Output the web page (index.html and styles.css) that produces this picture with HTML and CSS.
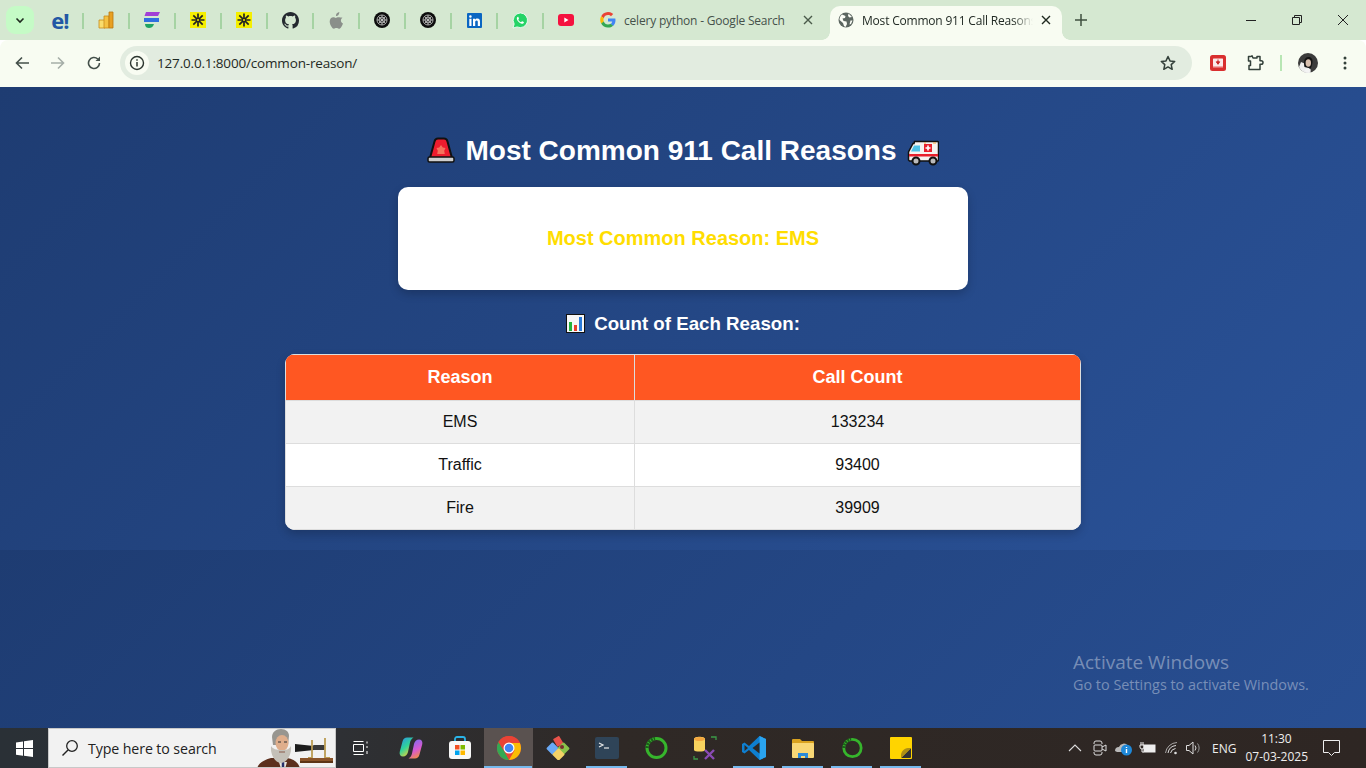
FILE: index.html
```html
<!DOCTYPE html>
<html lang="en">
<head>
<meta charset="utf-8">
<title>Most Common 911 Call Reasons</title>
<link rel="stylesheet" href="styles.css">
</head>
<body>
<div class="screen">
  <header class="tabstrip">
    <button class="tabsearch"><svg width="12" height="12" viewBox="0 0 12 12"><path d="M2.500 4.500 6 8l3.500-3.500" fill="none" stroke="#1f2a1f" stroke-width="1.600"/></svg></button>
    <div class="pins">
      <div class="pin"><span class="edureka">e!</span></div>
      <div class="pin"><svg width="16" height="18" viewBox="0 0 16 18"><path d="M1 9h6v8H1z" fill="#f9dc6c" stroke="#c98a1b" stroke-width=".8"/><path d="M6 5h5v12H6z" fill="#f4c142" stroke="#c98a1b" stroke-width=".8"/><path d="M11 1h4v16h-4z" fill="#e8a022" stroke="#b9770f" stroke-width=".8"/></svg></div>
      <div class="pin"><svg width="18" height="18" viewBox="0 0 18 18"><path d="M3 1h14l-2 4H1.500z" fill="#a23fd6"/><path d="M1 7h15v4H1z" fill="#2f6fe0"/><path d="M2 13h9c-1 3-3 4-5 4s-4-1-4-4z" fill="#1fa463"/></svg></div>
      <div class="pin"><svg width="16" height="16" viewBox="0 0 16 16"><rect width="16" height="16" fill="#f5ef00"/><g stroke="#222" stroke-width="1.700"><path d="M8 1.500v13M1.500 8h13M3.300 3.300l9.400 9.400M12.700 3.300l-9.400 9.400"/></g><circle cx="8" cy="8" r="1" fill="#f5ef00"/></svg></div>
      <div class="pin"><svg width="16" height="16" viewBox="0 0 16 16"><rect width="16" height="16" fill="#f5ef00"/><g stroke="#222" stroke-width="1.700"><path d="M8 1.500v13M1.500 8h13M3.300 3.300l9.400 9.400M12.700 3.300l-9.400 9.400"/></g><circle cx="8" cy="8" r="1" fill="#f5ef00"/></svg></div>
      <div class="pin"><svg width="17" height="17" viewBox="0 0 16 16"><path fill="#24292f" d="M8 0C3.580 0 0 3.580 0 8c0 3.540 2.290 6.530 5.470 7.590.4.070.55-.17.55-.38 0-.19-.01-.82-.01-1.490-2.010.37-2.530-.49-2.690-.94-.09-.23-.48-.94-.82-1.130-.28-.15-.68-.52-.01-.53.63-.01 1.080.58 1.230.82.720 1.210 1.870.87 2.330.66.070-.52.280-.87.510-1.070-1.780-.2-3.640-.89-3.640-3.950 0-.87.310-1.590.820-2.150-.08-.2-.36-1.020.08-2.120 0 0 .67-.21 2.200.82.640-.18 1.320-.27 2-.27s1.360.09 2 .27c1.530-1.040 2.200-.82 2.200-.82.440 1.100.160 1.920.080 2.120.510.560.820 1.270.820 2.150 0 3.070-1.870 3.750-3.650 3.950.290.250.540.730.540 1.480 0 1.070-.010 1.930-.010 2.200 0 .210.150.460.550.380A8.010 8.010 0 0 0 16 8c0-4.420-3.580-8-8-8z"/></svg></div>
      <div class="pin"><svg width="15" height="17" viewBox="0 0 15 17"><path fill="#8a8f8a" d="M10.300 0c.1 1.200-.3 2.100-.9 2.900-.6.700-1.500 1.200-2.400 1.100-.1-1 .3-2 .9-2.700C8.500.6 9.500.1 10.300 0zM13.500 5.800c-1 .7-1.600 1.600-1.600 2.800 0 1.400.8 2.500 2.100 3-.4 1.200-1 2.300-1.700 3.300-.7.900-1.400 1.800-2.400 1.800s-1.300-.6-2.500-.6-1.600.6-2.500.6c-1 0-1.700-1-2.400-2C1.400 13.300.7 11.300.7 9.500c0-2.800 1.800-4.300 3.600-4.300 1 0 1.800.7 2.500.7.600 0 1.600-.7 2.700-.7.900 0 2.800.2 4 .6z"/></svg></div>
      <div class="pin"><svg width="16" height="16" viewBox="0 0 16 16"><circle cx="8" cy="8" r="8" fill="#0d0d0d"/><g fill="none" stroke="#c9c9c9" stroke-width=".8"><circle cx="8" cy="8" r="5"/><circle cx="8" cy="8" r="3"/><path d="M3 8h10M8 3v10M4.500 4.500l7 7M11.500 4.500l-7 7"/></g></svg></div>
      <div class="pin"><svg width="16" height="16" viewBox="0 0 16 16"><circle cx="8" cy="8" r="8" fill="#0d0d0d"/><g fill="none" stroke="#c9c9c9" stroke-width=".8"><circle cx="8" cy="8" r="5"/><circle cx="8" cy="8" r="3"/><path d="M3 8h10M8 3v10M4.500 4.500l7 7M11.500 4.500l-7 7"/></g></svg></div>
      <div class="pin"><svg width="15" height="15" viewBox="0 0 15 15"><rect width="15" height="15" rx="1" fill="#0a66c2"/><path fill="#fff" d="M2.300 5.700h2.200V13H2.300zM3.400 2.200a1.300 1.300 0 1 1 0 2.600 1.300 1.300 0 0 1 0-2.600zM6 5.700h2.100v1c.4-.7 1.200-1.200 2.300-1.200 2.200 0 2.600 1.500 2.600 3.400V13h-2.200V9.300c0-.9 0-1.900-1.200-1.900s-1.400.9-1.400 1.900V13H6z"/></svg></div>
      <div class="pin"><svg width="17" height="17" viewBox="0 0 17 17"><path fill="#25d366" stroke="#fff" stroke-width=".8" d="M8.500 1a7.300 7.300 0 0 0-6.300 11L1 16l4.100-1.100A7.300 7.300 0 1 0 8.500 1z"/><path fill="#fff" d="M6 4.700c-.3 0-.8.300-1 .8-.4 1-.1 2.300 1 3.700 1.300 1.600 2.700 2.400 4 2.600.8.100 1.500-.4 1.800-1 .1-.3.1-.6 0-.7l-1.600-.8c-.2 0-.3 0-.4.100l-.6.700c-.1.100-.3.100-.4.100-1-.4-1.900-1.200-2.500-2.200 0-.2 0-.3.100-.4l.5-.6v-.4L6.400 5c-.1-.2-.2-.3-.4-.3z"/></svg></div>
      <div class="pin"><svg width="16" height="12" viewBox="0 0 16 12"><rect width="16" height="12" rx="3" fill="#f5123f"/><path d="M6.300 3.500v5L10.500 6z" fill="#fff"/></svg></div>
    </div>
    <div class="tab">
      <svg class="favicon" width="16" height="16" viewBox="0 0 16 16"><path fill="#ea4335" d="M8 3.100c1.300 0 2.300.500 3 1.200l2.200-2.200A7.600 7.600 0 0 0 1.200 4.300l2.600 2A4.500 4.500 0 0 1 8 3.100z"/><path fill="#4285f4" d="M15.500 8.200c0-.6-.1-1.100-.2-1.600H8v3h4.200a3.600 3.600 0 0 1-1.600 2.400l2.500 1.900c1.500-1.400 2.400-3.400 2.400-5.700z"/><path fill="#fbbc05" d="M3.800 9.700a4.500 4.500 0 0 1 0-3.400l-2.600-2a7.600 7.600 0 0 0 0 7.400z"/><path fill="#34a853" d="M8 15.600c2.100 0 3.800-.7 5.100-1.900L10.600 11.800c-.7.500-1.500.8-2.600.8a4.500 4.500 0 0 1-4.200-3l-2.600 2A7.600 7.600 0 0 0 8 15.600z"/></svg>
      <span class="tabtitle">celery python - Google Search</span>
      <svg class="tabclose" width="10" height="10" viewBox="0 0 10 10"><path d="m1 1 8 8M9 1 1 9" stroke="#4a5a4a" stroke-width="1.400"/></svg>
    </div>
    <div class="tab tab-active">
      <svg class="favicon" width="16" height="16" viewBox="0 0 16 16"><circle cx="8" cy="8" r="7.500" fill="#5b6660"/><path fill="#fbfdf6" d="M4 2.500 7.500 4 7 6 4.500 6.500 5.500 9l3 .5.500 2.500L7.500 15 6 14l-1-3-3.500-3C1.500 5.500 2.500 3.500 4 2.500zM10.500 1.500 14 5l-2.500.5-1.500-1.500zM12.500 8.500H14.500L13 12l-1.500.5z"/></svg>
      <span class="tabtitle tabtitle-active">Most Common 911 Call Reasons</span>
      <svg class="tabclose" width="10" height="10" viewBox="0 0 10 10"><path d="m1 1 8 8M9 1 1 9" stroke="#1f2a1f" stroke-width="1.400"/></svg>
    </div>
    <svg class="newtab" width="12" height="12" viewBox="0 0 12 12"><path d="M6 0v12M0 6h12" stroke="#3f4f3f" stroke-width="1.500"/></svg>
    <div class="winctl">
      <svg width="10" height="10" viewBox="0 0 10 10"><path d="M0 5.500h10" stroke="#222" stroke-width="1"/></svg>
      <svg width="10" height="10" viewBox="0 0 10 10"><path d="M.5 2.500h7v7h-7zM2.500 2.500v-2h7v7h-2" fill="none" stroke="#222"/></svg>
      <svg width="10" height="10" viewBox="0 0 10 10"><path d="m0 0 10 10M10 0 0 10" stroke="#222"/></svg>
    </div>
  </header>
  <nav class="toolbar">
    <svg class="navicon" width="14" height="14" viewBox="0 0 14 14"><path d="M14 7H2M7 1.500 1.500 7 7 12.500" fill="none" stroke="#44504a" stroke-width="1.600"/></svg>
    <svg class="navicon" width="14" height="14" viewBox="0 0 14 14"><path d="M0 7h12M7 1.500 12.500 7 7 12.500" fill="none" stroke="#a5aea8" stroke-width="1.600"/></svg>
    <svg class="navicon" width="14" height="14" viewBox="0 0 14 14"><path d="M12.500 7A5.500 5.500 0 1 1 10.800 3" fill="none" stroke="#44504a" stroke-width="1.600"/><path d="M13 .5V5H8.500z" fill="#44504a"/></svg>
    <div class="omnibox">
      <span class="siteinfo"><svg width="16" height="16" viewBox="0 0 16 16"><circle cx="8" cy="8" r="6.500" fill="none" stroke="#2b352e" stroke-width="1.400"/><path d="M8 7v4.500M8 4.300v1.500" stroke="#2b352e" stroke-width="1.500"/></svg></span>
      <span class="url">127.0.0.1:8000/common-reason/</span>
      <svg class="star" width="16" height="16" viewBox="0 0 16 16"><path d="m8 1.500 2 4.400 4.700.5-3.500 3.200 1 4.700L8 11.900l-4.200 2.400 1-4.700L1.300 6.400 6 5.900z" fill="none" stroke="#33403a" stroke-width="1.500" stroke-linejoin="round"/></svg>
    </div>
    <div class="extensions">
      <svg class="ext-red" width="16" height="16" viewBox="0 0 16 16"><rect width="16" height="16" rx="2.500" fill="#d92f2f"/><rect x="3" y="3.500" width="10" height="7.500" rx=".5" fill="#fbeaea"/><path d="M3 11h10v1.500H3z" fill="#f3a9a9"/><path d="M8 4.500v3M6.300 6.800 8 9.300l1.700-2.500z" fill="#c92626" stroke="#c92626"/></svg>
      <svg class="ext-puzzle" width="17" height="16" viewBox="0 0 17 16"><path d="M1.500 1.500H4L5 .8h0L6 3h4V1.500h3v4.200h1.200a1.600 1.600 0 0 1 0 3.600H13v5.200H2V10.500H3.500V6H1.500z" fill="none" stroke="#33403a" stroke-width="1.500" stroke-linejoin="round"/></svg>
      <span class="toolsep"></span>
      <svg class="avatar" width="20" height="20" viewBox="0 0 20 20"><circle cx="10" cy="10" r="10" fill="#3b3b3b"/><path d="M1 14c2 4 5 6 9 6 1 0 2 0 3-.5L10 12 3 9z" fill="#eee"/><path d="M6 9c0-3 2-5 4.500-5S15 6 14.500 9c-.2 3-1 5-2 6.500L6.500 14C6 12 6 11 6 9z" fill="#141414"/><ellipse cx="10.300" cy="10" rx="2.700" ry="3.700" fill="#d8bfae"/><path d="M6.500 17c1.500-2 5-2 6.500 0l-2 2.500H8z" fill="#f4f4f4"/></svg>
      <svg class="kebab" width="4" height="14" viewBox="0 0 4 14"><g fill="#33403a"><circle cx="2" cy="2" r="1.500"/><circle cx="2" cy="7" r="1.500"/><circle cx="2" cy="12" r="1.500"/></g></svg>
    </div>
  </nav>
  <main class="page">
    <h1 class="title">
      <svg class="emoji-siren" width="28" height="26" viewBox="0 0 28 26"><path d="M3 21 7.500 4.500C8 2.500 9 1.500 11 1.500h6c2 0 3 1 3.500 3L25 21z" fill="#ee1c2e" stroke="#111" stroke-width="2" stroke-linejoin="round"/><path d="m14 8 1.800 2.400 2.700.6-1.300 2.700.6 3.300H10.200l.6-3.300L9.500 11l2.700-.6z" fill="#f5735c"/><rect x="1" y="20" width="26" height="5" rx="1.500" fill="#cfcfcf" stroke="#111" stroke-width="1.500"/></svg>
      <span>Most Common 911 Call Reasons</span>
      <svg class="emoji-amb" width="32" height="26" viewBox="0 0 32 26"><path d="M1.500 20V12L6 3.500h1l.5-2h23a1 1 0 0 1 1 1V20a1 1 0 0 1-1 1H2.500z" fill="#f6f3f0" stroke="#111" stroke-width="1.500"/><path d="M4 11.500 7 5.500h6v6z" fill="#4fc3e8"/><rect x="17" y="4" width="8" height="8" fill="#e8202c"/><path d="M21 5.500v5M18.500 8h5" stroke="#fff" stroke-width="1.600"/><path d="M17 3h2M26 3h3" stroke="#f3a23a" stroke-width="1"/><rect x="2" y="14" width="29" height="2.500" fill="#e8202c"/><circle cx="9" cy="21" r="3.500" fill="#bbb" stroke="#111" stroke-width="2"/><circle cx="26" cy="21" r="3.500" fill="#bbb" stroke="#111" stroke-width="2"/></svg>
    </h1>
    <section class="card">
      <h2 class="reason">Most Common Reason: EMS</h2>
    </section>
    <h3 class="subtitle">
      <svg width="19" height="19" viewBox="0 0 19 19"><rect x=".5" y=".5" width="18" height="18" fill="#f7f7f7" stroke="#111"/><rect x="3" y="8" width="3" height="9" fill="#22b33a"/><rect x="8" y="11" width="3" height="6" fill="#e8402c"/><rect x="13" y="3" width="3" height="14" fill="#2a7ad9"/></svg>
      <span>Count of Each Reason:</span>
    </h3>
    <table class="counts">
      <thead><tr><th class="col-reason">Reason</th><th>Call Count</th></tr></thead>
      <tbody>
        <tr><td>EMS</td><td>133234</td></tr>
        <tr><td>Traffic</td><td>93400</td></tr>
        <tr><td>Fire</td><td>39909</td></tr>
      </tbody>
    </table>
    <div class="watermark">
      <div class="wm-title">Activate Windows</div>
      <div class="wm-sub">Go to Settings to activate Windows.</div>
    </div>
  </main>
  <footer class="taskbar">
    <div class="start"><svg width="17" height="17" viewBox="0 0 17 17"><path fill="#fff" d="M0 2.400 7 1.400v6.700H0zM8 1.300 17 0v8.100H8zM0 9h7v6.700l-7-1zM8 9h9v8l-9-1.300z"/></svg></div>
    <div class="search">
      <svg width="18" height="18" viewBox="0 0 18 18"><circle cx="11" cy="7" r="5.300" fill="none" stroke="#222" stroke-width="1.300"/><path d="M7 11 1.500 16.500" stroke="#222" stroke-width="1.500"/></svg>
      <span class="search-text">Type here to search</span>
      <svg class="doodle" width="84" height="40" viewBox="0 0 84 40"><path d="M4 40c1-6 7-9 14-11h16c7 1 12 5 13 11z" fill="#5c2f1d"/><path d="M26 33h8l-2 7h-4z" fill="#e9e6df"/><path d="M30 33v7" stroke="#27306a" stroke-width="2.500"/><path d="M19 8c0-5 4-8 9-8 5 0 8 3 8 7l-1 9H20z" fill="#989690"/><ellipse cx="29" cy="14" rx="6.500" ry="8" fill="#dfae8c"/><path d="M18 17c2 3 5 4 11 4s7-1 9-4c1 8-4 17-10 17s-11-9-10-17z" fill="#c4c0b8"/><path d="M25 13h3M31 13h3" stroke="#333"/><path d="M26 23h6" stroke="#8a5a4a"/><path d="M42 15l19 2v4l-19 2z" fill="#1c1c1c"/><rect x="60" y="16" width="12" height="5" rx="1" fill="#3a3a3a"/><path d="M59 11v18M72 9v20M59 29h-4M72 29h5" stroke="#bb9c52" stroke-width="1.800" fill="none"/><path d="M47 29h33v3H47z" fill="#8a5429"/><path d="M47 32h33v2H47z" fill="#5c3516"/></svg>
    </div>
    <div class="apps">
      <div class="app app-taskview"><svg width="16" height="16" viewBox="0 0 16 16"><path d="M.5 4.500h10v7H.5zM.5 1.500h10M.5 14.500h10M14 1.500v2M14 6v2M14 11v3" fill="none" stroke="#fff"/></svg></div>
      <div class="app"><svg width="24" height="24" viewBox="0 0 24 24"><defs><linearGradient id="cp1" x1="0" y1="0" x2=".6" y2="1"><stop offset="0" stop-color="#2b8fe8"/><stop offset=".55" stop-color="#2fd39a"/><stop offset="1" stop-color="#e8d23a"/></linearGradient><linearGradient id="cp2" x1=".3" y1="0" x2=".7" y2="1"><stop offset="0" stop-color="#7a6cf0"/><stop offset=".55" stop-color="#d85ad0"/><stop offset="1" stop-color="#f5913a"/></linearGradient></defs><path d="M8 1.500h6.500c-2 1-3 3-3.500 5L9 16c-.6 2.500-2.500 4.500-5 4.500-2.500 0-3.800-2-3.300-4.500L3.500 5.500C4 3 6 1.500 8 1.500z" fill="url(#cp1)"/><path d="M16 22.500H9.500c2-1 3-3 3.500-5L15 8c.6-2.500 2.500-4.500 5-4.500 2.500 0 3.800 2 3.300 4.500l-2.800 10.500C20 21 18 22.500 16 22.500z" fill="url(#cp2)"/></svg></div>
      <div class="app"><svg width="24" height="24" viewBox="0 0 24 24"><path d="M7 6V3a2 2 0 0 1 2-2h6a2 2 0 0 1 2 2v3" fill="none" stroke="#2ab4e8" stroke-width="1.800"/><rect x="1" y="5" width="22" height="18" rx="3" fill="#f8f8f8"/><rect x="7" y="9" width="4.500" height="4.500" fill="#f25022"/><rect x="12.500" y="9" width="4.500" height="4.500" fill="#7fba00"/><rect x="7" y="14.500" width="4.500" height="4.500" fill="#00a4ef"/><rect x="12.500" y="14.500" width="4.500" height="4.500" fill="#ffb900"/></svg></div>
      <div class="app app-open app-focus"><svg width="24" height="24" viewBox="0 0 24 24"><circle cx="12" cy="12" r="12" fill="#ea4335"/><path d="M12 24A12 12 0 0 1 1.600 6L7 15l5 9z" fill="#34a853"/><path d="M12 24 17.500 14.500 12 7h10.900A12 12 0 0 1 12 24z" fill="#fbbc05"/><path d="M1.600 6A12 12 0 0 1 22.900 7H12a5 5 0 0 0-5 8z" fill="#ea4335"/><circle cx="12" cy="12" r="5.500" fill="#fff"/><circle cx="12" cy="12" r="4.300" fill="#4285f4"/></svg></div>
      <div class="app"><svg width="24" height="24" viewBox="0 0 24 24"><rect x="9" y="1" width="7" height="9" rx="1" fill="#e8524a" transform="rotate(-30 12 6)"/><rect x="2" y="8" width="9" height="9" rx="1" fill="#6aa9f5" transform="rotate(45 6.500 12.500)"/><rect x="13" y="8" width="9" height="9" rx="1" fill="#8bc34a" transform="rotate(45 17.500 12.500)"/><rect x="8" y="14" width="9" height="9" rx="1" fill="#f3d267" transform="rotate(45 12.500 18.500)"/><circle cx="16" cy="11" r="2" fill="#7a3030"/></svg></div>
      <div class="app app-open"><svg width="24" height="22" viewBox="0 0 24 22"><rect width="24" height="22" rx="2" fill="#2f4458"/><path d="m4 6 4 2-4 2" fill="none" stroke="#e8e8e8" stroke-width="1.200"/><path d="M9 11h5" stroke="#e8e8e8" stroke-width="1.200"/></svg></div>
      <div class="app"><svg width="24" height="24" viewBox="0 0 24 24"><circle cx="12.500" cy="12" r="9.500" fill="none" stroke="#36b52c" stroke-width="3"/><path d="M3 12A10 10 0 0 1 11 2.500" fill="none" stroke="#1c5c1a" stroke-width="3.500" stroke-dasharray="2 1"/></svg></div>
      <div class="app"><svg width="24" height="24" viewBox="0 0 24 24"><path d="M1 20v3h4M18 1h5v3" fill="none" stroke="#3c9a48" stroke-width="1.300"/><path d="M1 3c0-3 11-3 11 0v11c0 2-11 2-11 0z" fill="#f7d35e"/><ellipse cx="6.500" cy="3" rx="5.500" ry="2" fill="#f3a740"/><path d="m12 14 9 9M21 14l-9 9" stroke="#8a4bb5" stroke-width="2.400"/></svg></div>
      <div class="app app-open"><svg width="24" height="24" viewBox="0 0 24 24"><path d="M17.500 0 24 3v18l-6.500 3L7 14l-4.500 3.500L0 16V8l2.500-1.500L7 10z" fill="#0e7fd0"/><path d="M17.500 0 24 3v18l-6.500 3z" fill="#2aa4f0"/><path d="M17.500 6.500 10.500 12l7 5.500z" fill="#2d2824"/><path d="M2.500 9 6 12l-3.500 3z" fill="#2d2824"/></svg></div>
      <div class="app app-open"><svg width="24" height="20" viewBox="0 0 24 20"><path d="M1 2a1 1 0 0 1 1-1h7l2 2h11a1 1 0 0 1 1 1v3H1z" fill="#d9a21f"/><rect x="1" y="5" width="22" height="15" rx="1" fill="#f8d775"/><path d="M7 20v-5h10v5h-3v-2h-4v2z" fill="#2a8ad8"/></svg></div>
      <div class="app app-open"><svg width="22" height="22" viewBox="0 0 24 24"><circle cx="12.500" cy="12" r="9.500" fill="none" stroke="#36b52c" stroke-width="3"/><path d="M3 12A10 10 0 0 1 11 2.500" fill="none" stroke="#1c5c1a" stroke-width="3.500" stroke-dasharray="2 1"/></svg></div>
      <div class="app app-open"><svg width="22" height="22" viewBox="0 0 22 22"><rect width="22" height="22" rx="1" fill="#ffd400"/><path d="M21 11v9a1 1 0 0 1-1 1H11z" fill="#333"/><path d="M21 11H18c-4 0-7 4-7 7v3z" fill="#ae8f14"/></svg></div>
    </div>
    <div class="tray">
      <svg class="tray-up" width="14" height="8" viewBox="0 0 14 8"><path d="m1 7 6-6 6 6" fill="none" stroke="#ddd" stroke-width="1.100"/></svg>
      <svg class="tray-meet" width="14" height="16" viewBox="0 0 14 16"><path d="M1 4V3a2 2 0 0 1 2-2h4a2 2 0 0 1 2 2v1M1 12v1a2 2 0 0 0 2 2h4a2 2 0 0 0 2-2v-1" fill="none" stroke="#ddd"/><rect x="1" y="5" width="8" height="6" rx="1" fill="none" stroke="#ddd"/><path d="m9 7 4-2v6l-4-2" fill="none" stroke="#ddd"/></svg>
      <svg class="tray-cloud" width="19" height="16" viewBox="0 0 19 16"><path d="M1 11a4 4 0 0 1 4-4 5 5 0 0 1 9-1v6H3z" fill="#b9b9b9"/><circle cx="12.500" cy="10" r="5.500" fill="#1e88d8"/><path d="M12.500 9v4M12.500 7v1" stroke="#fff" stroke-width="1.400"/></svg>
      <svg class="tray-batt" width="17" height="12" viewBox="0 0 17 12"><rect x="5" y="3" width="11" height="7" fill="#eee" stroke="#eee"/><path d="M1 3h4v2a2 2 0 0 1-4 0zM2 0v3M4 0v3M3 7v3h2" fill="none" stroke="#eee"/></svg>
      <svg class="tray-wifi" width="15" height="13" viewBox="0 0 15 13"><g fill="none" stroke="#ddd"><path d="M.5 11A12 12 0 0 1 12 .5" opacity=".7"/><path d="M3 11a9 9 0 0 1 8-7.500"/><path d="M5.500 11a6 6 0 0 1 5-4.500"/></g><circle cx="10.500" cy="11" r="1.300" fill="#ddd"/></svg>
      <svg class="tray-vol" width="16" height="14" viewBox="0 0 16 14"><path d="M.5 4.500H3L7 1v12L3 9.500H.5z" fill="none" stroke="#ddd"/><path d="M9 4.500a4 4 0 0 1 0 5" fill="none" stroke="#ddd"/><path d="M11.500 2.500a7 7 0 0 1 0 9" fill="none" stroke="#999"/></svg>
      <span class="lang">ENG</span>
      <div class="clock"><div>11:30</div><div>07-03-2025</div></div>
      <svg class="notify" width="17" height="16" viewBox="0 0 17 16"><path d="M.5.500h16v12h-5l-3 3-3-3h-5z" fill="none" stroke="#eee"/></svg>
    </div>
  </footer>
</div>
</body>
</html>
```
FILE: styles.css
```css
* { box-sizing: border-box; }
html, body { margin: 0; height: 100%; overflow: hidden; }
body { font-family: "Liberation Sans", Arial, sans-serif; }
.screen { width: 1366px; height: 768px; display: flex; flex-direction: column; }

/* browser tab strip */
.tabstrip { height: 40px; background: #d5e8d1; display: flex; align-items: flex-start; position: relative; flex: none; font-family: "Open Sans", sans-serif; }
.tabsearch { width: 28px; height: 28px; margin: 6px 0 0 6px; border: 0; padding: 0; border-radius: 9px; background: #c5fbc6; display: flex; align-items: center; justify-content: center; }
.pins { display: flex; margin-left: 3px; height: 40px; }
.pin { width: 46px; height: 40px; display: flex; align-items: center; justify-content: center; position: relative; }
.pin::after { content: ""; position: absolute; right: -1px; top: 13px; height: 16px; width: 2px; background: #a6d3a3; }
.pin:last-child::after { display: none; }
.edureka { font: 700 22px "Open Sans", sans-serif; color: #2257a4; letter-spacing: -1px; }
.tab { width: 241px; height: 34px; margin-top: 6px; display: flex; align-items: center; padding: 0 17px 6px 11px; gap: 8px; border-radius: 10px 10px 0 0; position: relative; }
.tab-active { background: #f8fcf2; width: 232px; padding: 0 11px 6px 8px; z-index: 1; }
.tab-active::before, .tab-active::after { content: ""; position: absolute; bottom: 0; width: 8px; height: 8px; }
.tab-active::before { left: -8px; background: radial-gradient(circle at 0 0, transparent 7.500px, #f8fcf2 8px); }
.tab-active::after { right: -8px; background: radial-gradient(circle at 100% 0, transparent 7.500px, #f8fcf2 8px); }
.tabtitle { flex: 1; font-size: 12px; letter-spacing: -.2px; color: #45514a; white-space: nowrap; overflow: hidden; }
.tabtitle-active { color: #222b25; -webkit-mask-image: linear-gradient(90deg, #000 88%, transparent); mask-image: linear-gradient(90deg, #000 88%, transparent); }
.favicon { flex: none; }
.tabclose { flex: none; }
.newtab { margin: 14px 0 0 13px; }
.winctl { margin-left: auto; display: flex; align-items: center; height: 40px; }
.winctl svg { width: 10px; margin: 0 18px; }

/* browser toolbar */
.toolbar { height: 47px; background: #f8fcf2; display: flex; align-items: center; flex: none; padding: 0 0 1px 15px; border-radius: 8px 8px 0 0; gap: 22px; }
.navicon { flex: none; }
.omnibox { width: 1072px; height: 34px; margin-left: -3px; border-radius: 17px; background: #e2ece0; display: flex; align-items: center; padding: 0 16px 0 5px; }
.siteinfo { width: 24px; height: 24px; border-radius: 50%; background: #f8fcf2; display: flex; align-items: center; justify-content: center; }
.url { font: 13.500px "Open Sans", sans-serif; color: #1f2a24; margin-left: 8px; flex: 1; letter-spacing: -.17px; }
.star { flex: none; }
.extensions { display: flex; align-items: center; margin-left: -4px; }
.ext-puzzle { margin-left: 21px; }
.toolsep { width: 2px; height: 16px; background: #b8e6b4; margin-left: 16px; }
.avatar { margin-left: 16px; }
.kebab { margin-left: 25px; }

/* page */
.page { flex: 1; position: relative; background: linear-gradient(135deg, #1e3c72, #2a5298) 0 0 / 100% 463px repeat-y; color: #fff; text-align: center; padding-top: 48px; }
.title { margin: 0 0 20px; font-size: 28px; line-height: 32px; height: 32px; font-weight: 700; display: flex; justify-content: center; align-items: center; gap: 10px; }
.emoji-siren { margin-top: -3px; }
.emoji-amb { margin-top: 3px; }
.card { width: 570px; height: 103px; margin: 0 auto; background: #fff; border-radius: 10px; box-shadow: 0 4px 10px rgba(0,0,0,.2); display: flex; align-items: center; justify-content: center; }
.reason { margin: 0; font-size: 20px; font-weight: 700; color: #ffdd00; }
.subtitle { margin: 23px 0 20px; height: 21px; font-size: 18.720px; line-height: 21px; font-weight: 700; display: flex; justify-content: center; align-items: center; gap: 9px; }
.counts { width: 796px; margin: 0 auto; border-collapse: collapse; background: #fff; color: #111; border-radius: 10px; overflow: hidden; box-shadow: 0 4px 10px rgba(0,0,0,.2); font-size: 16px; }
.counts th, .counts td { border: 1px solid #ddd; padding: 12px; text-align: center; font-weight: 400; line-height: 18px; }
.counts th { background: #ff5722; color: #fff; font-size: 18px; font-weight: 700; line-height: 21px; }
.counts tbody tr:nth-child(odd) td { background: #f2f2f2; }
.col-reason { width: 349px; }
.watermark { position: absolute; left: 1073px; top: 563px; text-align: left; color: rgba(255,255,255,.38); font-family: "Open Sans", sans-serif; white-space: nowrap; }
.wm-title { font-size: 19px; line-height: 24px; }
.wm-sub { font-size: 14.400px; line-height: 20px; margin-top: 1px; }

/* windows taskbar */
.taskbar { height: 40px; flex: none; display: flex; align-items: stretch; background: linear-gradient(90deg, #2a3036 0, #2e3034 25%, #2f2926 45%, #2e2623 100%); }
.start { width: 48px; display: flex; align-items: center; justify-content: center; }
.search { width: 288px; background: #f2f2f2; border: 1px solid #c8c8c8; display: flex; align-items: center; padding-left: 12px; position: relative; overflow: hidden; }
.search-text { font: 14.200px "Open Sans", sans-serif; color: #222; margin-left: 9px; letter-spacing: -.1px; }
.doodle { position: absolute; left: 204px; top: 0; }
.apps { display: flex; }
.app { width: 49px; display: flex; align-items: center; justify-content: center; position: relative; }
.app-taskview { width: 49px; margin-right: 1px; }
.app-open::after { content: ""; position: absolute; left: 4px; right: 4px; bottom: 0; height: 2px; background: #76b9ed; }
.app-focus { background: #5a5250; }
.app-focus::after { left: 0; right: 1px; }
.tray { margin-left: auto; display: flex; align-items: center; color: #eee; font: 12px "Open Sans", sans-serif; width: 298px; padding-left: 0; }
.tray svg { flex: none; }
.tray-meet { margin-left: 11px; }
.tray-cloud { margin-left: 6.500px; }
.tray-batt { margin-left: 6px; }
.tray-wifi { margin-left: 9px; }
.tray-vol { margin-left: 6.500px; }
.lang { margin-left: 10px; }
.clock { text-align: center; line-height: 18px; margin-left: 9px; width: 62px; white-space: nowrap; flex: none; }
.notify { margin-left: 15.500px; }
```
